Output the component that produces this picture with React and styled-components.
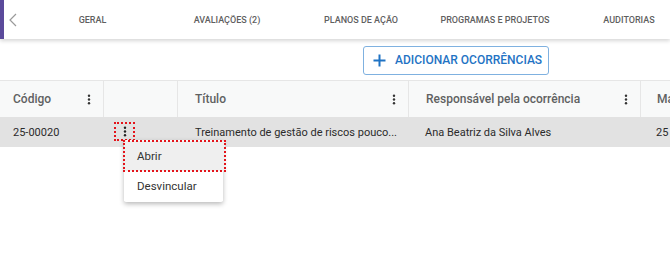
import React from "react";
import styled, { createGlobalStyle } from "styled-components";

const Global = createGlobalStyle`
  html, body { margin: 0; padding: 0; background: #fff; }
  body { font-family: Roboto, "Noto Sans", Arial, sans-serif; overflow: hidden; }
  * { box-sizing: border-box; }
`;

const Page = styled.div`
  width: 670px;
  height: 266px;
  overflow: hidden;
  position: relative;
`;

const TabBar = styled.div`
  display: flex;
  align-items: center;
  height: 39px;
  background: #fff;
  border-left: 4px solid #5b4a9b;
  box-shadow: 0 2px 4px rgba(0, 0, 0, 0.16);
  position: relative;
  z-index: 2;
`;

const Chevron = styled.div`
  width: 16px;
  flex-shrink: 0;
  display: flex;
  align-items: center;
  justify-content: center;
  padding-left: 2px;
`;

const Tabs = styled.div`
  display: flex;
  flex: 1;
  align-items: center;
  overflow: hidden;
`;

const Tab = styled.div`
  flex: 0 0 ${(p) => p.$w}px;
  text-align: center;
  font-size: 9px;
  font-weight: 500;
  color: #5f5f5f;
  white-space: nowrap;
`;

const Toolbar = styled.div`
  height: 41px;
  display: flex;
  align-items: center;
  padding-left: 363px;
  padding-top: 1px;
`;

const AddButton = styled.button`
  height: 29px;
  width: 186px;
  display: flex;
  align-items: center;
  gap: 9px;
  padding: 0 0 0 9px;
  background: #fff;
  border: 1px solid #7fb1e0;
  border-radius: 3px;
  color: #1f73c4;
  font-family: Roboto, Arial, sans-serif;
  font-weight: 500;
  font-size: 12px;
  white-space: nowrap;
  svg { flex-shrink: 0; }
`;

const Table = styled.div`
  border-top: 1px solid #e6e6e6;
`;

const Row = styled.div`
  display: grid;
  grid-template-columns: 103px 74px 231px 232px 1fr;
  height: ${(p) => (p.$head ? 36 : 30)}px;
  background: ${(p) => (p.$head ? "#f8f9f9" : "#e2e2e2")};
`;

const Cell = styled.div`
  display: flex;
  align-items: center;
  justify-content: space-between;
  padding: 0 ${(p) => (p.$pr ?? 12)}px 0 ${(p) => p.$pl ?? 13}px;
  border-left: ${(p) => (p.$sep ? "1px solid #e6e6e6" : "none")};
  font-size: ${(p) => (p.$head ? 12 : 11)}px;
  font-weight: ${(p) => (p.$head ? 500 : 400)};
  color: ${(p) => (p.$head ? "#5f6161" : "#2b2b2b")};
  white-space: nowrap;
  overflow: hidden;
  position: relative;
`;

const Kebab = ({ color = "#333" }) => (
  <svg width="4" height="11" viewBox="0 0 4 11">
    <circle cx="2" cy="1.7" r="1.2" fill={color} />
    <circle cx="2" cy="5.5" r="1.2" fill={color} />
    <circle cx="2" cy="9.3" r="1.2" fill={color} />
  </svg>
);

const KebabBox = styled.div`
  position: absolute;
  left: 12px;
  top: 6px;
  width: 19px;
  height: 17px;
  display: flex;
  align-items: center;
  justify-content: center;
  outline: 2px dotted #e3141b;
  outline-offset: -1px;
`;

const Menu = styled.div`
  position: absolute;
  left: 124px;
  top: 140px;
  width: 99px;
  background: #fff;
  box-shadow: 0 2px 5px rgba(0, 0, 0, 0.28);
  border-radius: 2px;
  padding: 1px 0;
  z-index: 5;
`;

const MenuItem = styled.div`
  height: 30px;
  display: flex;
  align-items: center;
  padding-left: 13px;
  font-size: 11.5px;
  color: #333;
  background: ${(p) => (p.$active ? "#efefef" : "#fff")};
  outline: ${(p) => (p.$active ? "2px dotted #e3141b" : "none")};
  outline-offset: -1px;
  width: ${(p) => (p.$active ? "101px" : "auto")};
`;

export default function App() {
  return (
    <Page>
      <Global />
      <TabBar>
        <Chevron>
          <svg width="8" height="14" viewBox="0 0 8 14">
            <path d="M7 1 L1 7 L7 13" fill="none" stroke="#9a9a9a" strokeWidth="1.2" />
          </svg>
        </Chevron>
        <Tabs>
          <Tab $w={145}>GERAL</Tab>
          <Tab $w={124}>AVALIAÇÕES (2)</Tab>
          <Tab $w={144}>PLANOS DE AÇÃO</Tab>
          <Tab $w={124}>PROGRAMAS E PROJETOS</Tab>
          <Tab $w={144}>AUDITORIAS</Tab>
        </Tabs>
      </TabBar>
      <Toolbar>
        <AddButton>
          <svg width="13" height="13" viewBox="0 0 13 13">
            <path d="M6.5 0.5 V12.5 M0.5 6.5 H12.5" stroke="#1f73c4" strokeWidth="2" />
          </svg>
          ADICIONAR OCORRÊNCIAS
        </AddButton>
      </Toolbar>
      <Table>
        <Row $head>
          <Cell $head>
            Código
            <Kebab />
          </Cell>
          <Cell $head $sep />
          <Cell $head $sep $pl={17}>
            Título
            <Kebab />
          </Cell>
          <Cell $head $sep $pl={17}>
            Responsável pela ocorrência
            <Kebab />
          </Cell>
          <Cell $head $sep $pl={16}>
            Ma
          </Cell>
        </Row>
        <Row>
          <Cell>25-00020</Cell>
          <Cell>
            <KebabBox>
              <Kebab color="#222" />
            </KebabBox>
          </Cell>
          <Cell $pl={18} $pr={8}>Treinamento de gestão de riscos pouco...</Cell>
          <Cell $pl={17}>Ana Beatriz da Silva Alves</Cell>
          <Cell $pl={16}>25</Cell>
        </Row>
      </Table>
      <Menu>
        <MenuItem $active>Abrir</MenuItem>
        <MenuItem>Desvincular</MenuItem>
      </Menu>
    </Page>
  );
}
